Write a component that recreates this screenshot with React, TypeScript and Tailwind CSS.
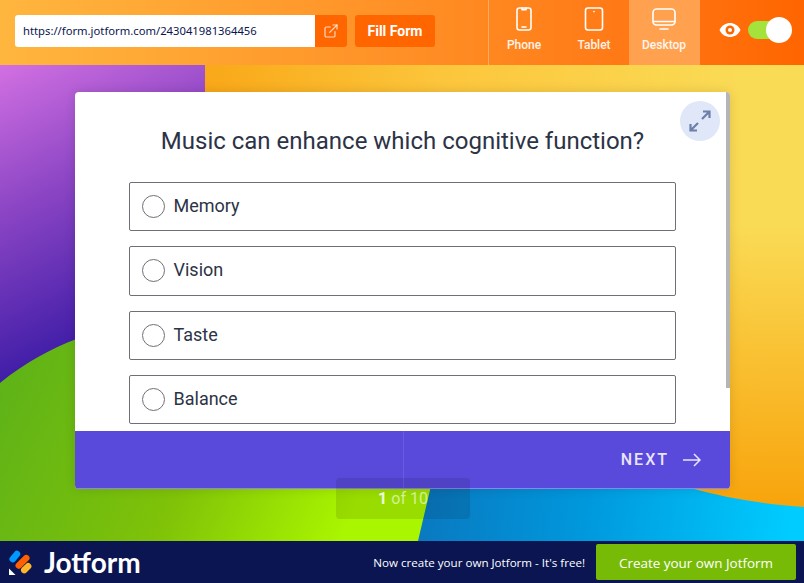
import React from "react";
import { ExternalLink } from "lucide-react";

const options = ["Memory", "Vision", "Taste", "Balance"];

function Backdrop() {
    return (
        <svg className="absolute inset-0 w-full h-full" viewBox="0 0 804 476" preserveAspectRatio="none">
            <defs>
                <linearGradient id="yellow" gradientUnits="userSpaceOnUse" x1="205" y1="30" x2="740" y2="0">
                    <stop offset="0%" stopColor="#f9a818" />
                    <stop offset="45%" stopColor="#fcc63c" />
                    <stop offset="100%" stopColor="#fadb55" />
                </linearGradient>
                <linearGradient id="orange" gradientUnits="userSpaceOnUse" x1="0" y1="160" x2="0" y2="440">
                    <stop offset="0%" stopColor="#f8a40c" stopOpacity="0" />
                    <stop offset="100%" stopColor="#f8a40c" />
                </linearGradient>
                <linearGradient id="purple" gradientUnits="userSpaceOnUse" x1="0" y1="0" x2="130" y2="270">
                    <stop offset="0%" stopColor="#d270e2" />
                    <stop offset="45%" stopColor="#8b45c4" />
                    <stop offset="100%" stopColor="#3a1aa5" />
                </linearGradient>
                <linearGradient id="blue" gradientUnits="userSpaceOnUse" x1="420" y1="420" x2="790" y2="470">
                    <stop offset="0%" stopColor="#0a78c0" />
                    <stop offset="45%" stopColor="#0098dc" />
                    <stop offset="100%" stopColor="#00ccff" />
                </linearGradient>
                <linearGradient id="green" gradientUnits="userSpaceOnUse" x1="0" y1="320" x2="340" y2="476">
                    <stop offset="0%" stopColor="#5fb318" />
                    <stop offset="55%" stopColor="#7fc208" />
                    <stop offset="100%" stopColor="#aaf500" />
                </linearGradient>
            </defs>
            <rect width="804" height="476" fill="url(#yellow)" />
            <rect width="804" height="476" fill="url(#orange)" />
            <path d="M0 0H205V400H0Z" fill="url(#purple)" />
            <path d="M0 360L430 300L690 423C730 434 770 440 804 442V476H0Z" fill="url(#blue)" />
            <path d="M0 318C60 270 130 250 210 262C340 280 460 340 430 425L418 476H0Z" fill="url(#green)" />
        </svg>
    );
}

function DeviceTab({ label, active, children }: { label: string; active?: boolean; children: React.ReactNode }) {
    return (
        <div className={`h-full flex flex-col items-center pt-[7px] ${active ? "w-[71px] pr-px bg-[#ffa14f]" : "w-[70px]"}`}>
            <svg width="24" height="24" viewBox="0 0 24 24" fill="none" stroke="white" strokeWidth="1.6" strokeLinecap="round" strokeLinejoin="round">
                {children}
            </svg>
            <span className="mt-[6px] text-[12px] leading-[16px] font-medium text-white/90 font-['Roboto',sans-serif]">{label}</span>
        </div>
    );
}

export default function App() {
    return (
        <div className="w-[804px] h-[583px] flex flex-col overflow-hidden font-['Roboto',sans-serif]">
            {/* Top bar */}
            <div className="h-[65px] shrink-0 flex items-start pl-[15px] bg-gradient-to-r from-[#ffb63e] to-[#ff6500]">
                <div className="mt-[15px] w-[300px] h-[32px] bg-white rounded-l-[3px] flex items-center pl-2 text-[11.250px] text-[#0a1551] font-['Noto_Sans',sans-serif]">
                    https://form.jotform.com/243041981364456
                </div>
                <div className="mt-[15px] w-[32px] h-[32px] bg-[#ff6600] rounded-r-[3px] flex items-center justify-center">
                    <ExternalLink className="w-[16px] h-[16px] text-white/75" strokeWidth={1.8} />
                </div>
                <div className="mt-[15px] ml-2 w-[80px] h-[32px] bg-[#ff6600] rounded-[3px] flex items-center justify-center text-white text-[14px] font-bold">
                    Fill Form
                </div>
                <div className="ml-[53px] h-full flex border-l border-white/30">
                    <DeviceTab label="Phone">
                        <rect x="5" y="1" width="14" height="22" rx="2.5" />
                        <path d="M10 1v1.800h4V1M10 20h4" />
                    </DeviceTab>
                    <DeviceTab label="Tablet">
                        <rect x="3.500" y="1" width="17" height="22" rx="2.5" />
                        <path d="M12 4.500v.1" />
                    </DeviceTab>
                    <DeviceTab label="Desktop" active>
                        <rect x="1" y="2" width="22" height="16" rx="3.500" />
                        <path d="M1 14.500h22M8 22h8" />
                    </DeviceTab>
                </div>
                <div className="ml-[19px] mt-[21px] flex items-center">
                    <svg width="22" height="16" viewBox="0 0 22 16">
                        <path d="M0.5 8C3 3 7 1 11 1s8 2 10.500 7c-2.500 5-6.500 7-10.500 7S3 13 0.500 8Z" fill="white" />
                        <circle cx="11" cy="8" r="4.500" fill="#ff6600" />
                        <circle cx="11" cy="8" r="2" fill="white" />
                    </svg>
                    <div className="ml-[7px] w-[43px] h-[18px] rounded-full bg-[#a4e33b] flex items-center justify-end">
                        <div className="w-[26px] h-[26px] rounded-full bg-white -mr-[1px]" />
                    </div>
                </div>
            </div>

            {/* Form area */}
            <div className="relative flex-1 pt-[27px] pl-[75px]">
                <Backdrop />
                <div className="relative w-[655px] h-[397px] rounded-[4px] overflow-hidden bg-white shadow-[0_0_12px_rgba(0,0,0,0.12)] flex flex-col">
                    <div className="absolute right-0 top-0 w-[4px] h-[296px] bg-[#b5b5b5]" />
                    <div className="absolute right-[10px] top-[9px] w-[40px] h-[40px] rounded-full bg-[#dfe7f8] flex items-center justify-center">
                        <svg width="22" height="22" viewBox="0 0 22 22" fill="none" stroke="#6b7fa8" strokeWidth="2.200">
                            <path d="M13 9l7-7M14 1.500h6.500V8M9 13l-7 7M8 20.500H1.500V14" />
                        </svg>
                    </div>
                    <div className="flex-1 flex flex-col px-[54px] pt-[35px]">
                        <h1 className="text-center text-[24px] leading-[28px] text-[#2c3345] -mx-[20px]">
                            Music can enhance which cognitive function?
                        </h1>
                        <div className="mt-[27px] flex flex-col gap-[15px]">
                            {options.map((o) => (
                                <div key={o} className="h-[49.330px] border border-[#6f7077] rounded-[2px] flex items-center pl-[12px]">
                                    <span className="w-[23px] h-[23px] rounded-full border border-[#6f7077]" />
                                    <span className="ml-[8.500px] mb-[2px] text-[18px] text-[#2c3345]">{o}</span>
                                </div>
                            ))}
                        </div>
                    </div>
                    <div className="relative h-[58px] shrink-0 bg-[#5a4adb] flex items-center justify-end pr-[29px] border-b border-[#8f84ea]">
                        <div className="absolute left-[328px] top-0 h-full w-px bg-white/10" />
                        <span className="text-[16px] font-medium tracking-[2px] text-[#e8e5fb]">NEXT</span>
                        <svg className="ml-[14px]" width="18" height="14" viewBox="0 0 18 14" fill="none" stroke="#e8e5fb" strokeWidth="1.500">
                            <path d="M0 7h17M11 1l6 6-6 6" />
                        </svg>
                    </div>
                </div>
                <div className="absolute left-[336px] top-[413px] w-[134px] h-[41px] rounded-[4px] bg-black/10 flex items-center justify-center text-[16px] text-white/60">
                    <span className="font-bold text-white/85">1</span>&nbsp;of 10
                </div>
            </div>

            {/* Footer */}
            <div className="h-[42px] shrink-0 bg-[#0a1551] flex items-center pl-[9px] pr-[8px]">
                <svg width="23" height="25" viewBox="0 0 23 25">
                    <rect x="3" y="0" width="6.500" height="13" rx="3.200" transform="rotate(40 6 6)" fill="#0099ff" />
                    <rect x="10" y="3" width="6.500" height="17" rx="3.200" transform="rotate(45 13 12)" fill="#ff6100" />
                    <rect x="14" y="12" width="6.500" height="12" rx="3.200" transform="rotate(45 17 18)" fill="#ffb629" />
                    <path d="M0 18.500V25h6.500Z" fill="white" />
                </svg>
                <span className="ml-[12px] text-[28px] leading-[32px] font-bold text-white font-['Lato',sans-serif]">Jotform</span>
                <span className="ml-auto pt-[2px] text-[11.600px] text-white font-['Open_Sans',sans-serif]">Now create your own Jotform - It's free!</span>
                <div className="ml-[11px] w-[200px] h-[36px] pt-[2px] bg-[#78bb07] rounded-[2px] flex items-center justify-center text-[13.450px] text-white font-['Open_Sans',sans-serif]">
                    Create your own Jotform
                </div>
            </div>
        </div>
    );
}
